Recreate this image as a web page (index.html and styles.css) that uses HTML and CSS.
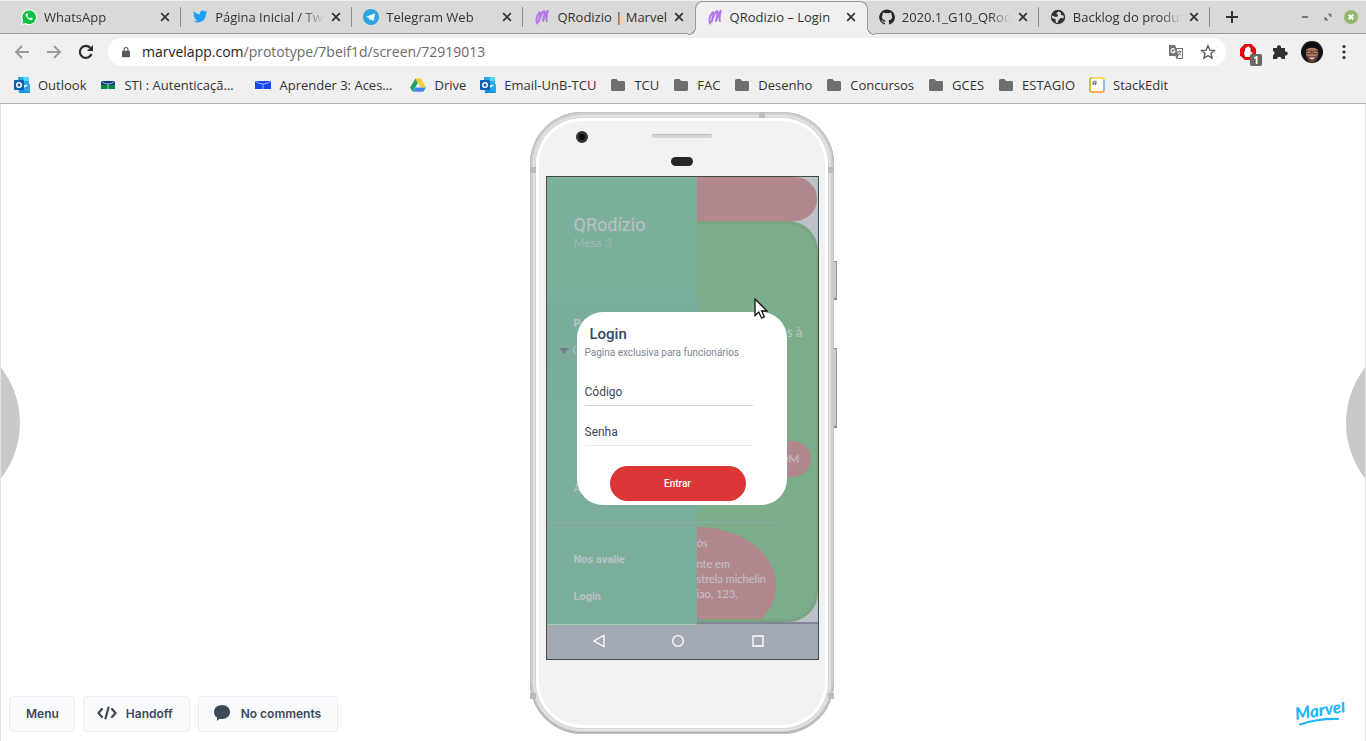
FILE: index.html
```html
<!DOCTYPE html>
<html lang="pt-BR">
<head>
<meta charset="utf-8">
<title>QRodizio – Login</title>
<link rel="stylesheet" href="styles.css">
</head>
<body>
<svg class="defs" aria-hidden="true">
  <symbol id="x" viewBox="0 0 10 10"><path d="M1.2 1.2l7.6 7.6M8.800 1.200L1.200 8.800" stroke="#333" stroke-width="1.7" fill="none"/></symbol>
  <symbol id="folder" viewBox="0 0 16 16"><path d="M1 3.500q0-1.500 1.500-1.500h4l1.600 2h5.500q1.400 0 1.400 1.400v7.200q0 1.400-1.400 1.400H2.400Q1 14 1 12.600z" fill="#6e6e6e"/></symbol>
  <symbol id="m" viewBox="0 0 16 16"><path d="M3 14.500C1.800 11 3 7 4.800 4.500 7 1.500 6.800 5 5.800 8L4.500 13C5.800 9 7 5.500 9 3c1.800-2 2 0 1.400 2.300L9 12C10 8.500 11.500 4.500 13.800 1.800 13 5 11.800 9 12.800 12" stroke="#b678e8" stroke-width="2" fill="none" stroke-linecap="round" stroke-linejoin="round"/></symbol>
  <symbol id="outlook" viewBox="0 0 16 16"><path d="M4 0h11v8H4z" fill="#28a8ea"/><path d="M9.500 0H15v4H9.500z" fill="#50d9ff"/><path d="M4 4h5.500v4H4z" fill="#0364b8"/><path d="M4 8l6 3 6-4v9H5z" fill="#1490df"/><path d="M8 12l8 4V8z" fill="#28a8ea"/><rect y="3" width="10" height="10" rx="1" fill="#0a5fb4"/><circle cx="5" cy="8" r="2.300" fill="none" stroke="#fff" stroke-width="1.500"/></symbol>
</svg>
<header class="browser">
  <div class="strip">
    <nav class="tabs" aria-label="Abas">
      <div class="tab"><svg class="ico" viewBox="0 0 16 16"><path d="M0 16l1.200-4.200A7.800 7.800 0 1 1 4.400 15z" fill="#fff"/><path d="M1.300 14.700l.9-3.200A6.800 6.800 0 1 1 4.600 14z" fill="#10bf45"/><path d="M5.600 4.200c-1.400.7-1.300 2.500.5 4.600s4 3 5.100 1.900c.6-.6.500-1.300.3-1.400l-1.500-.8-1 1C7.800 9 6.800 8 6.400 7l.7-.9-.7-1.700z" fill="#fff"/></svg><span class="title">WhatsApp</span><button class="close" aria-label="Fechar"><svg><use href="#x"/></svg></button></div>
      <div class="tab"><svg class="ico" viewBox="0 0 16 16"><path d="M15.500 3.500l-1.600 1.600c.2 6-5.500 10.500-12.700 7.400 1.700 0 3-.4 4-1.300-1.400-.2-2.300-1-2.600-2.100h1.200C2.300 8.600 1.400 7.400 1.400 6l1.300.3C1.400 5.200 1.200 3.600 2 2.300 3.600 4.200 5.500 5.200 7.900 5.400 7.400 3 9 1.500 10.800 1.500c.9 0 1.700.4 2.200 1l1.900-.7-1.200 1.800z" fill="#1da1f2"/></svg><span class="title">Página Inicial / Twitter</span><button class="close" aria-label="Fechar"><svg><use href="#x"/></svg></button></div>
      <div class="tab"><svg class="ico" viewBox="0 0 16 16"><circle cx="8" cy="8" r="8" fill="#2ba5e0"/><path d="M3 7.900l9-3.700-1.500 8-2.700-2-1.300 1.400-.5-2.700z" fill="#fff"/><path d="M6 8.900l4.500-3.300-3.700 4-.3 2z" fill="#b5dcf2"/></svg><span class="title">Telegram Web</span><button class="close" aria-label="Fechar"><svg><use href="#x"/></svg></button></div>
      <div class="tab plain"><svg class="ico"><use href="#m"/></svg><span class="title">QRodizio | Marvel</span><button class="close" aria-label="Fechar"><svg><use href="#x"/></svg></button></div>
      <div class="tab active"><svg class="ico"><use href="#m"/></svg><span class="title">QRodizio – Login</span><button class="close" aria-label="Fechar"><svg><use href="#x"/></svg></button></div>
      <div class="tab"><svg class="ico" viewBox="0 0 16 16"><path d="M8 .4a7.800 7.800 0 0 0-2.500 15.200c.4 0 .5-.2.500-.4v-1.500c-2.200.5-2.600-.9-2.600-.9-.4-.9-.9-1.200-.9-1.200-.7-.5.100-.5.100-.5.800.1 1.200.8 1.200.8.700 1.200 1.800.9 2.300.7 0-.5.300-.9.500-1.100-1.800-.2-3.600-.9-3.600-3.900 0-.8.300-1.500.8-2.100 0-.2-.3-1 .1-2.100 0 0 .7-.2 2.200.8a7 7 0 0 1 3.900 0c1.500-1 2.200-.8 2.200-.8.400 1.100.1 1.900.1 2.100.5.600.8 1.300.8 2.100 0 3-1.900 3.700-3.600 3.900.3.200.5.700.5 1.400v2.300c0 .2.200.5.600.4A7.800 7.800 0 0 0 8 .4z" fill="#24292e"/></svg><span class="title">2020.1_G10_QRodizio</span><button class="close" aria-label="Fechar"><svg><use href="#x"/></svg></button></div>
      <div class="tab"><svg class="ico" viewBox="0 0 16 16"><circle cx="8" cy="8" r="7.200" fill="#303030"/><path d="M8.500 2.500L6 4.500l2 1.200-.5 2H5L2 6.500 1.800 9l3.700 1 .3 3.600 2 .3.500-2.400L10.500 9l3 .3.300-2.500-2.600-.8-.4-2.500z" fill="#d9d9d9"/></svg><span class="title">Backlog do produto</span><button class="close" aria-label="Fechar"><svg><use href="#x"/></svg></button></div>
    </nav>
    <button class="newtab" aria-label="Nova aba"><svg viewBox="0 0 14 14"><path d="M7 1v12M1 7h12" stroke="#333" stroke-width="2"/></svg></button>
    <div class="window">
      <button aria-label="Minimizar"><svg viewBox="0 0 14 14"><path d="M4 7h6" stroke="#777" stroke-width="2"/></svg></button>
      <button aria-label="Restaurar"><svg viewBox="0 0 14 14"><path d="M7.500 4H10v3zM4 7v3h3z" fill="#777" stroke="#777"/></svg></button>
      <button aria-label="Fechar janela"><svg viewBox="0 0 14 14"><circle cx="7" cy="7" r="7" fill="#90b96d"/><path d="M4.700 4.700l4.600 4.600M9.300 4.700L4.700 9.300" stroke="#fff" stroke-width="2"/></svg></button>
    </div>
  </div>
  <div class="toolbar">
    <button class="tool" aria-label="Voltar"><svg viewBox="0 0 16 16"><path d="M15 8H2M8 2L2 8l6 6" stroke="#9b9b9b" stroke-width="1.900" fill="none"/></svg></button>
    <button class="tool" aria-label="Avançar"><svg viewBox="0 0 16 16"><path d="M1 8h13M8 2l6 6-6 6" stroke="#9b9b9b" stroke-width="1.900" fill="none"/></svg></button>
    <button class="tool" aria-label="Recarregar"><svg viewBox="0 0 16 16"><path d="M13.500 10A6 6 0 1 1 12.400 4" stroke="#2c2c2c" stroke-width="2.200" fill="none"/><path d="M15 1v6H9z" fill="#2c2c2c"/></svg></button>
    <div class="address">
      <svg class="lock" viewBox="0 0 10 13"><path d="M1 5h8q1 0 1 1v6q0 1-1 1H1q-1 0-1-1V6q0-1 1-1z" fill="#5a5a5a"/><path d="M2.500 5.500V3.300a2.500 2.500 0 0 1 5 0v2.200" stroke="#5a5a5a" stroke-width="1.300" fill="none"/></svg>
      <div class="url">marvelapp.com<span>/prototype/7beif1d/screen/72919013</span></div>
      <button class="tool" aria-label="Traduzir"><svg viewBox="0 0 16 16"><path d="M1 1h6l1.300 3H15v11H8.500L7.500 12H1z" fill="#757575"/><path d="M8.700 5H14v9H9.500l1-2z" fill="#fff"/><path d="M6.500 5.300A2 2 0 1 0 7 7H5" stroke="#fff" stroke-width="1.100" fill="none"/><path d="M9.500 7.500h4M11.500 6.500v1M12.800 7.500q-.8 3-3 4M10.500 8.500l2.500 3" stroke="#757575" fill="none"/></svg></button>
      <button class="tool" aria-label="Favoritar"><svg viewBox="0 0 16 16"><path d="M8 1.800l1.900 4.300 4.600.4L11 9.600l1 4.500-4-2.400-4 2.400 1-4.500-3.500-3.100 4.600-.4z" fill="none" stroke="#5a5a5a" stroke-width="1.400"/></svg></button>
    </div>
    <button class="ext block" aria-label="Bloqueador"><svg viewBox="0 0 16 16"><path d="M4.700 0h6.600L16 4.700v6.600L11.300 16H4.700L0 11.300V4.700z" fill="#e30a13"/><path d="M4 7.500l1 .3V4.500q.7-1 1.300 0V3.300q.8-1 1.400 0v-.5q.8-.9 1.500 0v1q.8-.8 1.400 0V9l1.400-1.300q.8.200.4 1L9.500 13h-4Q4 11 4 7.500z" fill="#fff"/></svg><span class="count">1</span></button>
    <button class="ext" aria-label="Extensões"><svg viewBox="0 0 16 16"><path d="M1 4h4a2.100 2.100 0 1 1 4 0h4v3.500a2.100 2.100 0 1 1 0 4V15H9.500a2.200 2.200 0 0 0-4.400 0H1v-3.800a2.200 2.200 0 0 0 0-4.200z" fill="#303030"/></svg></button>
    <button class="ext face" aria-label="Perfil"><svg viewBox="0 0 22 22"><circle cx="11" cy="11" r="11" fill="#151313"/><path d="M5.500 8q5.500-3.500 11 0l.8 4q-.5 6-4.300 8.500H9.500Q5.500 18 5 12z" fill="#b07a62"/><path d="M3.500 9q7-5 15 0l-1-5.500Q11-.5 5 3.500z" fill="#0b1117"/><path d="M5.800 10h4.400v2.600H6.500zM12 10h4.400l-.7 2.600H12z" fill="#c9957e" stroke="#33221f" stroke-width=".8"/><path d="M5.200 14q.8 5 3 6.600h5.500q2.800-1.600 3.300-6.600-2 1.500-5.900 1.300Q7.200 15.500 5.200 14z" fill="#6b3f33"/><path d="M8 16q3 1 6 0-1 2.400-3 2.400T8 16z" fill="#f0d8cf"/></svg></button>
    <button class="ext" aria-label="Menu do navegador"><svg viewBox="0 0 16 16"><g fill="#303030"><circle cx="8" cy="2.500" r="1.600"/><circle cx="8" cy="8" r="1.600"/><circle cx="8" cy="13.500" r="1.600"/></g></svg></button>
  </div>
  <nav class="bookmarks" aria-label="Favoritos">
    <a href="#"><svg><use href="#outlook"/></svg>Outlook</a>
    <a href="#" class="cut"><svg viewBox="0 0 16 16"><path d="M1 4h14v4H1z" fill="#0b3b82"/><path d="M1 8h14v4H1z" fill="#078543"/><path d="M1 4q3 3 7 3t7-3M8 7v5" stroke="#e8eef2" stroke-width=".7" fill="none"/></svg><span>STI : Autenticação Central</span></a>
    <a href="#" class="cut"><svg viewBox="0 0 16 16"><path d="M0 4h16v8H0z" fill="#1646e8"/><path d="M0 4q3 3 8 3t8-3M8 7v5" stroke="#dce5ff" stroke-width=".7" fill="none"/></svg><span>Aprender 3: Acesso ao site</span></a>
    <a href="#"><svg viewBox="0 0 16 16"><path d="M5.500 1.500L0 10.500l2.700 4.200L8 5.700z" fill="#20a464"/><path d="M5.500 1.500h5.200l5.300 9h-5.200z" fill="#fdcb2e"/><path d="M5.500 10.500H16l-2.700 4.200H2.900z" fill="#4587f4"/></svg>Drive</a>
    <a href="#"><svg><use href="#outlook"/></svg>Email-UnB-TCU</a>
    <a href="#"><svg><use href="#folder"/></svg>TCU</a>
    <a href="#"><svg><use href="#folder"/></svg>FAC</a>
    <a href="#"><svg><use href="#folder"/></svg>Desenho</a>
    <a href="#"><svg><use href="#folder"/></svg>Concursos</a>
    <a href="#"><svg><use href="#folder"/></svg>GCES</a>
    <a href="#"><svg><use href="#folder"/></svg>ESTAGIO</a>
    <a href="#"><svg viewBox="0 0 16 16"><rect x=".8" y=".8" width="14.400" height="14.400" rx="2.500" fill="#fff"/><path d="M1 13V3q0-2 2-2" stroke="#a4c400" stroke-width="1.600" fill="none"/><path d="M3 1h10q2 0 2 2" stroke="#ffd42a" stroke-width="1.600" fill="none"/><path d="M15 3v10" stroke="#6aaef5" stroke-width="1.600"/><path d="M15 13q0 2-2 2H3q-2 0-2-2" stroke="#f7931e" stroke-width="1.600" fill="none"/><path d="M5 3.500L4.500 8M7 3.500L6.500 8M3.300 5h4.500M3.200 6.700h4.500" stroke="#555" stroke-width=".7"/></svg>StackEdit</a>
  </nav>
</header>

<main class="viewer">
  <button class="side prev" aria-label="Tela anterior"></button>
  <div class="actions">
    <button>Menu</button>
    <button><svg viewBox="0 0 20 14"><path d="M5 3L1.500 7 5 11M15 3l3.500 4-3.500 4M11.500 1.500l-3 11" stroke="#3f4a59" stroke-width="2.200" fill="none" stroke-linecap="round"/></svg>Handoff</button>
    <button><svg viewBox="0 0 18 16"><path d="M9 0c4.700 0 8 3 8 7s-3.300 7-8 7q-1.500 0-2.500-.3L4 16v-3.500Q1 10.500 1 7c0-4 3.300-7 8-7z" fill="#3f4a59"/></svg>No comments</button>
  </div>

  <div class="device">
    <i class="band top"></i><i class="band left high"></i><i class="band right high"></i><i class="band left low"></i><i class="band right low"></i>
    <i class="key power"></i><i class="key volume"></i>
    <div class="phone">
      <div class="forehead"><i class="camera"></i><i class="speaker"></i><i class="sensor"></i></div>
      <div class="screen">
        <section class="home">
          <div class="banner"></div>
          <div class="card">
            <p class="lead">s à</p>
            <p class="pill">OM</p>
            <div class="about"><p class="who">ós</p><p>nte em</p><p>strela michelin</p><p>iao, 123,</p></div>
          </div>
        </section>
        <aside class="drawer">
          <h1>QRodízio</h1>
          <p class="table">Mesa 3</p>
          <p class="item orders">P</p>
          <p class="item menu"><svg viewBox="0 0 10 6"><path d="M0 0h10L5 6z" fill="#777985"/></svg>C</p>
          <p class="item help">A</p>
          <hr>
          <p class="item rate">Nos avalie</p>
          <p class="item">Login</p>
        </aside>
        <form class="login">
          <h2>Login</h2>
          <p>Pagina exclusiva para funcionários</p>
          <input type="text" placeholder="Código" aria-label="Código">
          <input class="pass" type="password" placeholder="Senha" aria-label="Senha">
          <button type="button">Entrar</button>
        </form>
        <div class="navbar">
          <button aria-label="Voltar"><svg viewBox="0 0 14 14"><path d="M12 1.300v11.400L2 7z"/></svg></button>
          <button aria-label="Início"><svg viewBox="0 0 14 14"><circle cx="7" cy="7" r="5.300"/></svg></button>
          <button aria-label="Recentes"><svg viewBox="0 0 14 14"><path d="M2 2h10v10H2z"/></svg></button>
        </div>
      </div>
    </div>
    <svg class="cursor" viewBox="0 0 14 22"><path d="M1 1v16.500l3.800-3.500 2.700 6 2.800-1.200L7.700 13H13z" fill="#fff" stroke="#111" stroke-width="1.300"/></svg>
  </div>

  <a class="brand" href="#" aria-label="Marvel"><svg viewBox="0 0 52 26"><text x="1" y="18" transform="rotate(-9 1 18)">Marvel</text><path d="M5 22.500Q23 16.500 43 17" stroke="#1fb6ff" stroke-width="2.200" fill="none" stroke-linecap="round"/></svg></a>
  <button class="side next" aria-label="Próxima tela"></button>
</main>
</body>
</html>
```
FILE: styles.css
```css
* { box-sizing: border-box; }
html, body { height: 100%; }
body {
  margin: 0;
  display: flex;
  flex-direction: column;
  background: #fff;
  font-family: "Open Sans", "Noto Sans", sans-serif;
  font-size: 13px;
  color: #333;
}
button {
  margin: 0;
  padding: 0;
  border: 0;
  background: none;
  font: inherit;
  color: inherit;
}
h1, h2, p { margin: 0; }
svg { display: block; flex: none; }
.defs { position: absolute; width: 0; height: 0; }

/* browser chrome */
.browser { background: #f0f0f0; border-bottom: 1px solid #b4b4b4; }
.strip {
  display: flex;
  align-items: center;
  height: 34px;
  padding-left: 10px;
  background: #d9d9d9;
  border-top: 1px solid #efefef;
  border-bottom: 1px solid #999;
}
.tabs { display: flex; flex: 0 1 1200px; min-width: 0; }
.tab {
  position: relative;
  display: flex;
  flex: 1 1 0;
  align-items: center;
  gap: 7px;
  min-width: 0;
  height: 33px;
  padding: 0 11px 0 11px;
}
.tab::after {
  content: "";
  position: absolute;
  right: 0;
  top: 6px;
  width: 1px;
  height: 20px;
  background: #8c8c8c;
}
.tab.plain::after { display: none; }
.tab.active {
  height: 34px;
  margin-bottom: -1px;
  padding-bottom: 2px;
  border: 1px solid #999;
  border-bottom: 0;
  border-radius: 8px 8px 0 0;
  background: #f0f0f0;
}
.tab.active::before, .tab.active::after {
  content: "";
  position: absolute;
  top: auto;
  bottom: 0;
  width: 8px;
  height: 8px;
}
.tab.active::before { left: -8px; background: radial-gradient(circle at 0 0, #d9d9d9 7px, #999 7px, #999 8px, #f0f0f0 8px); }
.tab.active::after { right: -8px; background: radial-gradient(circle at 100% 0, #d9d9d9 7px, #999 7px, #999 8px, #f0f0f0 8px); }
.ico { width: 16px; height: 16px; }
.title {
  flex: 1;
  overflow: hidden;
  white-space: nowrap;
  mask-image: linear-gradient(90deg, #000 80%, transparent);
}
.plain .title, .active .title { overflow: visible; mask-image: none; }
.close svg { width: 10px; height: 10px; }
.newtab { margin-left: 15px; }
.newtab svg { width: 14px; height: 14px; }
.window { display: flex; gap: 9px; margin-left: auto; padding-right: 8px; }
.window svg { width: 14px; height: 14px; }

.toolbar { display: flex; align-items: center; height: 36px; padding: 0 14px; }
.tool { padding: 0 8px; }
.tool svg { width: 16px; height: 16px; }
.toolbar > .tool:first-child { padding-left: 0; }
.address {
  display: flex;
  flex: 1;
  align-items: center;
  height: 28px;
  margin: 0 14px 0 6px;
  padding: 0 2px 0 14px;
  border-radius: 14px;
  background: #fff;
}
.lock { width: 8px; height: 12px; }
.url { flex: 1; margin-left: 12px; padding-bottom: 2px; font-size: 14px; color: #222; }
.url span { color: #6a6a6a; }
.ext { margin-left: 16px; }
.ext svg { width: 16px; height: 16px; }
.ext.block { position: relative; margin-left: 0; }
.ext.face { margin-left: 13px; }
.ext.face svg { width: 22px; height: 22px; }
.ext:last-child { margin-left: 13px; }
.count {
  position: absolute;
  left: 10px;
  top: 10px;
  width: 12px;
  height: 12px;
  border-radius: 2px;
  background: #666;
  color: #fff;
  font-size: 10px;
  font-weight: 700;
  line-height: 12px;
}

.bookmarks { display: flex; align-items: center; gap: 14px; height: 33px; padding: 0 14px 4px; }
.bookmarks a { display: flex; align-items: center; gap: 8px; color: #333; text-decoration: none; white-space: nowrap; }
.bookmarks svg { width: 16px; height: 16px; }
.bookmarks .cut { width: 138px; margin-right: 3px; }
.bookmarks span { overflow: hidden; text-overflow: ellipsis; }

/* prototype viewer */
.viewer {
  position: relative;
  display: grid;
  flex: 1;
  grid-template-columns: 1fr auto 1fr;
  padding: 8px 8px 7px;
  border: solid #e3e3e3;
  border-width: 0 1px;
  overflow: hidden;
}
.side {
  position: absolute;
  top: 50%;
  width: 180px;
  height: 180px;
  margin-top: -90px;
  border-radius: 50%;
  background: #c9c9c9;
}
.prev { left: -161px; }
.next { right: -161px; }
.actions { display: flex; align-self: end; gap: 8px; padding-bottom: 2px; }
.actions button {
  display: flex;
  align-items: center;
  gap: 9px;
  height: 36px;
  padding: 0 16px 2px;
  border: 1px solid #ebedf0;
  border-radius: 4px;
  background: #f9fafc;
  color: #3c4858;
  font: 600 12px Inter, sans-serif;
  white-space: nowrap;
}
.actions button:first-child { padding: 0 15px 2px 16px; }
.actions button:nth-child(n+2) { padding: 0 16px 2px 13px; }
.actions svg { width: 20px; height: 16px; }
.brand { align-self: end; justify-self: end; padding: 0 10px 6px 0; }
.brand svg { width: 52px; height: 26px; }
.brand text { font: italic 900 17px Lato, sans-serif; fill: #1fb6ff; }

/* phone frame */
.device { position: relative; align-self: start; padding-right: 3px; }
.phone {
  padding: 0 15px 74px 16px;
  border-radius: 52px;
  background: #f2f2f2;
  box-shadow: inset 0 0 0 1px #c4c4c4, inset 0 -1px 0 1px #adadad, inset 0 0 0 3px #cfcfcf, inset 0 0 0 5px #e2e2e2, inset 0 0 0 6px #d6d6d6, inset 0 0 0 9px #fff;
}
.forehead { display: grid; height: 64px; grid-template-columns: 1fr 60px 1fr; padding-top: 19px; align-content: start; }
.camera {
  width: 12px;
  height: 12px;
  margin-left: 30px;
  border: 3px solid #333;
  border-radius: 50%;
  background: #0b0b0b;
}
.speaker { height: 4px; margin-top: 3px; border-radius: 2px; background: #d5d8d6; border-top: 1px solid #bbb; }
.sensor { grid-column: 2; width: 22px; height: 9px; margin-top: 14px; justify-self: center; border-radius: 5px; background: #262626; }
.band { position: absolute; width: 6px; height: 6px; background: #bcbcbc; z-index: 1; }
.band.top { right: 72px; top: 0; }
.left { left: 0; }
.right { right: 3px; }
.high { top: 55px; }
.low { bottom: 35px; }
.key { position: absolute; right: 0; width: 3px; background: #ccc; border-top: 1px solid #888; border-bottom: 2px solid #888; border-right: 1px solid #999; }
.power { top: 149px; height: 39px; }
.volume { top: 236px; height: 80px; }

/* app screen: stacked layers */
.screen {
  display: grid;
  width: 273px;
  grid-template: 447px 35px / 30px 120px 1fr 31px;
  border: 1px solid #444b47;
  background: #bcc0c8;
}
.home { grid-area: 1 / 3 / 2 / 5; color: #c2c4ca; font: 11px/15px Lato, sans-serif; border-bottom: 2px solid #7f8796; }
.banner { height: 44px; margin-right: 1px; border-radius: 0 22px 22px 0; background: #b3888d; }
.card {
  height: 401px;
  overflow: hidden;
  border: solid #7aa381;
  border-width: 3px 2px 3px 0;
  border-radius: 0 30px 30px 0;
  background: #7cae8c;
}
.lead { padding: 101px 13px 0 0; text-align: right; font-size: 13px; }
.pill { width: 114px; height: 36px; margin-top: 101px; padding-right: 11px; border-radius: 18px; background: #b3888d; font-size: 12px; line-height: 36px; text-align: right; }
.about { width: 79px; height: 116px; margin-top: 50px; padding-top: 8px; border-radius: 0 100% 100% 0 / 0 50% 50% 0; background: #b3888d; white-space: nowrap; }
.about .who { margin-bottom: 6px; }
.drawer {
  z-index: 1;
  grid-area: 1 / 1 / 2 / 3;
  margin-bottom: -1px;
  padding: 37px 0 0 27px;
  border-bottom: 1px solid #9fd0b6;
  background: linear-gradient(#7bb09a 0, #7cb09a 105px, #7bad9f 130px, #7bae9b 60%);
  color: #bcc0c8;
  font: 11px/16px Roboto, sans-serif;
}
.drawer h1 { font: 400 18px/22px Roboto, sans-serif; }
.table { font: 300 12px/14px Lato, sans-serif; }
.item { font-weight: 700; }
.orders { margin-top: 66px; }
.menu { display: flex; align-items: center; gap: 4px; margin: 11px 0 0 -15px; font-weight: 400; }
.menu svg { width: 10px; height: 6px; }
.help { margin-top: 122px; font-weight: 400; }
.drawer hr { width: 228px; height: 1px; margin: 25px 0 29px -27px; border: 0; background: #8fabaa; }
.rate { margin-bottom: 21px; }
.login {
  z-index: 2;
  display: flex;
  flex-direction: column;
  align-self: start;
  grid-area: 1 / 2 / 2 / 4;
  margin-top: 135px;
  padding: 12px 34px 4px 8px;
  border-radius: 26px;
  background: #fff;
  color: #3c4858;
  font: 12px/14px Roboto, sans-serif;
}
.login h2 { padding-left: 5px; font: 500 15px/20px Roboto, sans-serif; }
.login p { margin-top: 2px; font-size: 10px; line-height: 14px; color: #7c8593; white-space: nowrap; }
.login input {
  width: 100%;
  height: 27px;
  margin-top: 19px;
  padding: 0;
  border: 0;
  border-bottom: 1px solid #cbd5e0;
  border-radius: 0;
  background: none;
  font: inherit;
  color: inherit;
}
.login input.pass { margin-top: 13px; border-color: #e5e9f2; }
.login ::placeholder { color: #3c4858; opacity: 1; }
.login button {
  width: 136px;
  height: 35px;
  margin: 20px 0 0 25px;
  border-radius: 18px;
  background: #db3535;
  color: #fff;
  font: 500 10px Roboto, sans-serif;
}
.navbar { display: flex; grid-area: 2 / 1 / 3 / 5; justify-content: space-between; align-items: center; padding: 0 53px 2px 45px; background: #a3a9b2; }
.navbar svg { width: 14px; height: 14px; fill: none; stroke: #fff; stroke-width: 1.3; }
.cursor { position: absolute; z-index: 2; left: 224px; top: 186px; width: 14px; height: 22px; }
```
